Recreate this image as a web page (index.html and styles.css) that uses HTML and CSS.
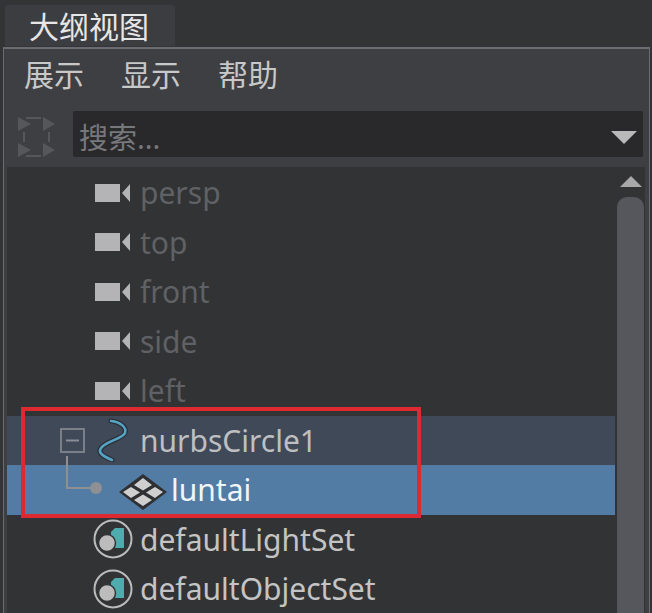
FILE: index.html
```html
<!DOCTYPE html>
<html lang="zh-CN">
<head>
    <meta charset="UTF-8">
    <meta name="viewport" content="width=device-width, initial-scale=1.0">
    <title>大纲视图</title>
    <link rel="stylesheet" href="styles.css">
</head>
<body>
    <div class="tab">大纲视图</div>
    <div class="panel">
        <div class="menu">
            <span>展示</span>
            <span>显示</span>
            <span>帮助</span>
        </div>
        <div class="search-row">
            <svg class="search-icon" width="38" height="46" viewBox="0 0 38 46">
                <path d="M0 6 L13 13 L0 20Z M25 6 L37 13 L25 20Z M0 32 L13 39 L0 46Z M25 32 L37 39 L25 46Z" fill="#55575b"/>
                <path d="M8 7H23 M8 45H23 M6 21V31 M31 21V31" stroke="#55575b" stroke-width="2" fill="none"/>
            </svg>
            <div class="search-box">
                <span class="placeholder">搜索...</span>
                <span class="arrow-down"></span>
            </div>
        </div>
        <div class="tree-area">
            <div class="tree">
                <div class="row dim">
                    <svg class="icon" width="36" height="20" viewBox="0 0 36 20"><path d="M0 1H25V19H0Z M35 1V19L27 10Z" fill="#b4b4b6"/></svg>
                    <span>persp</span>
                </div>
                <div class="row dim">
                    <svg class="icon" width="36" height="20" viewBox="0 0 36 20"><path d="M0 1H25V19H0Z M35 1V19L27 10Z" fill="#b4b4b6"/></svg>
                    <span>top</span>
                </div>
                <div class="row dim">
                    <svg class="icon" width="36" height="20" viewBox="0 0 36 20"><path d="M0 1H25V19H0Z M35 1V19L27 10Z" fill="#b4b4b6"/></svg>
                    <span>front</span>
                </div>
                <div class="row dim">
                    <svg class="icon" width="36" height="20" viewBox="0 0 36 20"><path d="M0 1H25V19H0Z M35 1V19L27 10Z" fill="#b4b4b6"/></svg>
                    <span>side</span>
                </div>
                <div class="row dim">
                    <svg class="icon" width="36" height="20" viewBox="0 0 36 20"><path d="M0 1H25V19H0Z M35 1V19L27 10Z" fill="#b4b4b6"/></svg>
                    <span>left</span>
                </div>
                <div class="row parent">
                    <svg class="toggle" width="25" height="25" viewBox="0 0 25 25">
                        <rect x="1" y="1" width="23" height="23" fill="none" stroke="#7b7f87" stroke-width="2"/>
                        <path d="M6 12.500H19" stroke="#8b8e95" stroke-width="2"/>
                    </svg>
                    <svg class="curve" width="34" height="44" viewBox="0 0 34 44">
                        <path d="M15 3 C24 4 31 9 29 15 C27 21 6 24 4 32 C3 36 9 39 16 42" fill="none" stroke="#2b3038" stroke-width="5" stroke-linecap="round"/>
                        <path d="M15 3 C24 4 31 9 29 15 C27 21 6 24 4 32 C3 36 9 39 16 42" fill="none" stroke="#55a4c4" stroke-width="2.500" stroke-linecap="round"/>
                    </svg>
                    <span>nurbsCircle1</span>
                </div>
                <div class="row selected">
                    <svg class="connector" width="38" height="40" viewBox="0 0 38 40">
                        <path d="M1 0V32H28" fill="none" stroke="#8f9094" stroke-width="2"/>
                        <circle cx="30" cy="32" r="6" fill="#8f9094"/>
                    </svg>
                    <svg class="diamond" width="48" height="36" viewBox="0 0 48 36">
                        <path d="M24 0 L48 18 L24 36 L0 18Z" fill="#2f3033"/>
                        <path d="M24 4 L33 11 L24 16.500 L15 11Z M12 13 L21 18.500 L12 24 L4 18Z M36 13 L44 18 L36 24 L27 18.500Z M24 20.500 L33 26 L24 32 L15 26Z" fill="#cfcfd0"/>
                    </svg>
                    <span>luntai</span>
                </div>
                <div class="row">
                    <svg class="icon" width="40" height="40" viewBox="0 0 40 40">
                        <circle cx="20" cy="20" r="18.500" fill="none" stroke="#bcbcbc" stroke-width="2"/>
                        <path d="M18 13 L22 9 H31 V29 H18Z" fill="#4eacae"/>
                        <circle cx="14" cy="24" r="8.500" fill="#bcbcbc" stroke="#323334" stroke-width="1.500"/>
                    </svg>
                    <span>defaultLightSet</span>
                </div>
                <div class="row">
                    <svg class="icon" width="40" height="40" viewBox="0 0 40 40">
                        <circle cx="20" cy="20" r="18.500" fill="none" stroke="#bcbcbc" stroke-width="2"/>
                        <path d="M18 13 L22 9 H31 V29 H18Z" fill="#4eacae"/>
                        <circle cx="14" cy="24" r="8.500" fill="#bcbcbc" stroke="#323334" stroke-width="1.500"/>
                    </svg>
                    <span>defaultObjectSet</span>
                </div>
            </div>
            <div class="scrollbar">
                <span class="arrow-up"></span>
                <div class="thumb"></div>
            </div>
        </div>
    </div>
    <div class="callout"></div>
</body>
</html>
```

FILE: styles.css
```css
html, body {
    height: 100%;
}
body {
    margin: 0;
    overflow: hidden;
    background-color: #333436;
    font-family: "Noto Sans", "Noto Sans CJK SC", sans-serif;
    font-size: 30px;
    color: #c4c4c4;
    display: flex;
    flex-direction: column;
    padding-top: 5px;
    box-sizing: border-box;
}
.tab {
    width: 170px;
    height: 41px;
    margin-left: 5px;
    box-sizing: border-box;
    padding-left: 24px;
    background-color: #3c3d41;
    border-radius: 3px 3px 0 0;
    color: #e6e6e6;
    font-size: 30px;
    line-height: 44px;
    flex-shrink: 0;
}
.panel {
    flex: 1;
    min-height: 0;
    margin: 1px 2px 0 3px;
    border: solid #6b6c73;
    border-width: 2px 1px 0 1px;
    background-color: #3e3f43;
    display: flex;
    flex-direction: column;
}
.menu {
    height: 62px;
    display: flex;
    gap: 37px;
    padding-left: 20px;
    font-size: 30px;
    line-height: 52px;
    color: #c8c8c8;
    flex-shrink: 0;
}
.search-row {
    height: 46px;
    display: flex;
    align-items: center;
    padding-left: 14px;
    padding-right: 6px;
    flex-shrink: 0;
}
.search-icon {
    flex-shrink: 0;
    margin-right: 17px;
}
.search-box {
    flex: 1;
    height: 46px;
    background-color: #29292b;
    border-radius: 2px;
    display: flex;
    align-items: center;
    justify-content: space-between;
    padding: 0 6px 0 6px;
}
.placeholder {
    font-size: 29px;
    color: #77787b;
    line-height: 46px;
    padding-top: 8px;
}
.arrow-down {
    width: 0;
    height: 0;
    margin-top: 6px;
    border-left: 13px solid transparent;
    border-right: 13px solid transparent;
    border-top: 13px solid #b9b9ba;
}
.tree-area {
    flex: 1;
    min-height: 0;
    margin: 10px 4px 0 3px;
    display: flex;
    background-color: #323334;
}
.tree {
    width: 608px;
    padding-top: 1px;
    flex-shrink: 0;
}
.row {
    height: 49.500px;
    display: flex;
    align-items: center;
    padding-left: 86px;
    box-sizing: border-box;
    position: relative;
}
.dim {
    color: #5f6165;
}
.icon {
    width: 40px;
    margin-right: 7px;
    flex-shrink: 0;
}
.parent {
    background-color: #404958;
    color: #bebfc0;
    padding-left: 53px;
}
.toggle {
    margin-right: 11px;
    flex-shrink: 0;
}
.curve {
    margin-right: 10px;
    flex-shrink: 0;
}
.selected {
    background-color: #527ca4;
    color: #f2f5f8;
}
.connector {
    position: absolute;
    left: 59px;
    top: -9px;
    overflow: visible;
}
.diamond {
    margin-left: 26px;
    margin-right: 4px;
    margin-top: 5px;
    flex-shrink: 0;
}
.scrollbar {
    margin-left: 2px;
    width: 27px;
    display: flex;
    flex-direction: column;
    align-items: center;
}
.arrow-up {
    margin-top: 9px;
    width: 0;
    height: 0;
    border-left: 11px solid transparent;
    border-right: 11px solid transparent;
    border-bottom: 11px solid #a8a8a9;
}
.thumb {
    margin-top: 10px;
    width: 27px;
    flex: 1;
    background-color: #55575d;
    border-radius: 10px 10px 0 0;
}
.callout {
    position: absolute;
    left: 21px;
    top: 407px;
    width: 400px;
    height: 111px;
    box-sizing: border-box;
    border: 4px solid #dc2a30;
}
```
